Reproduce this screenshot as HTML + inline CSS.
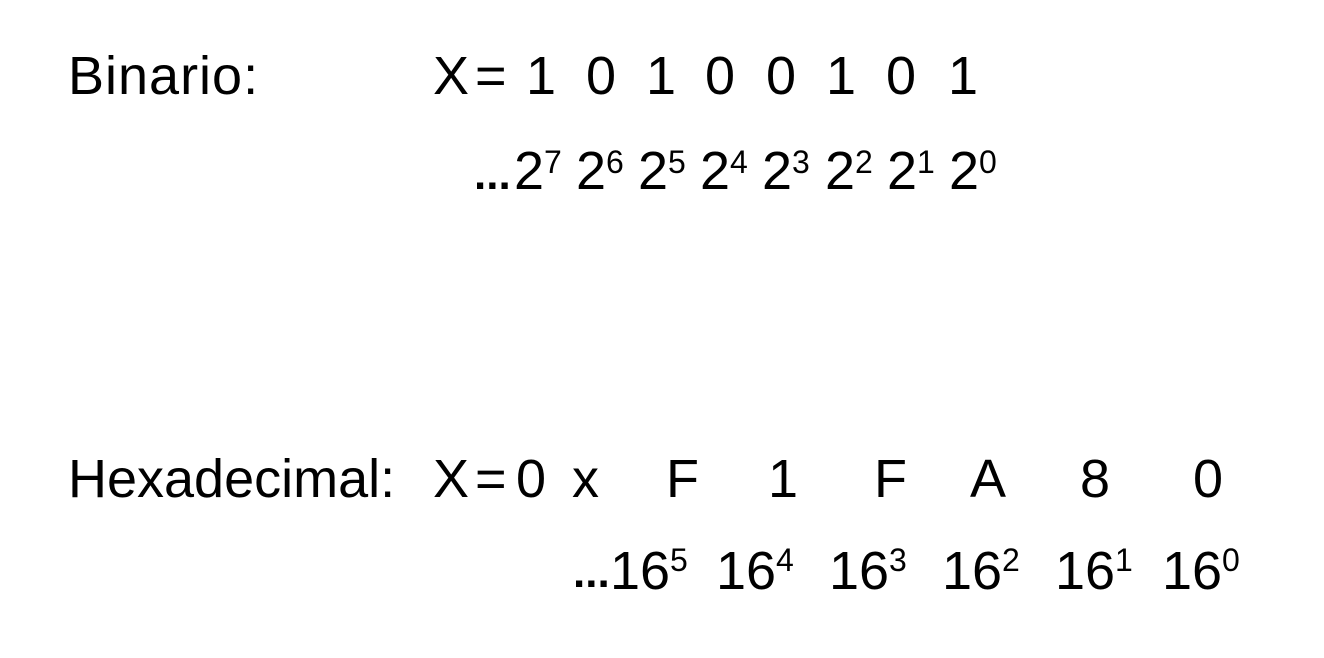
<!DOCTYPE html>
<html><head><meta charset="utf-8"><style>
html,body{margin:0;padding:0;background:#fff;}
body{width:1324px;height:658px;position:relative;overflow:hidden;font-family:"Liberation Sans",sans-serif;color:#000;}
span{position:absolute;font-size:54px;line-height:1;white-space:pre;}
span.s{font-size:32px;}
span.e{font-size:44px;font-weight:bold;}
</style></head><body>
<span style="left:68px;top:49px;letter-spacing:1px">Binario:</span>
<span style="left:433px;top:49px">X</span>
<span style="left:475px;top:49px">=</span>
<span style="left:526px;top:49px">1</span>
<span style="left:586px;top:49px">0</span>
<span style="left:646px;top:49px">1</span>
<span style="left:705px;top:49px">0</span>
<span style="left:766px;top:49px">0</span>
<span style="left:826px;top:49px">1</span>
<span style="left:886px;top:49px">0</span>
<span style="left:948px;top:49px">1</span>

<span class="e" style="left:474px;top:153px">...</span>
<span style="left:514px;top:144px">2</span><span class="s" style="left:544px;top:146px">7</span>
<span style="left:576px;top:144px">2</span><span class="s" style="left:606px;top:146px">6</span>
<span style="left:638px;top:144px">2</span><span class="s" style="left:668px;top:146px">5</span>
<span style="left:700px;top:144px">2</span><span class="s" style="left:730px;top:146px">4</span>
<span style="left:762px;top:144px">2</span><span class="s" style="left:792px;top:146px">3</span>
<span style="left:825px;top:144px">2</span><span class="s" style="left:855px;top:146px">2</span>
<span style="left:887px;top:144px">2</span><span class="s" style="left:917px;top:146px">1</span>
<span style="left:949px;top:144px">2</span><span class="s" style="left:979px;top:146px">0</span>

<span style="left:68px;top:452px">Hexadecimal:</span>
<span style="left:433px;top:452px">X</span>
<span style="left:475px;top:452px">=</span>
<span style="left:516px;top:452px">0</span>
<span style="left:572px;top:452px">x</span>
<span style="left:666px;top:452px">F</span>
<span style="left:768px;top:452px">1</span>
<span style="left:874px;top:452px">F</span>
<span style="left:970px;top:452px">A</span>
<span style="left:1080px;top:452px">8</span>
<span style="left:1193px;top:452px">0</span>

<span class="e" style="left:573px;top:551px">...</span>
<span style="left:610px;top:544px">16</span><span class="s" style="left:670px;top:544px">5</span>
<span style="left:716px;top:544px">16</span><span class="s" style="left:776px;top:544px">4</span>
<span style="left:829px;top:544px">16</span><span class="s" style="left:889px;top:544px">3</span>
<span style="left:942px;top:544px">16</span><span class="s" style="left:1002px;top:544px">2</span>
<span style="left:1055px;top:544px">16</span><span class="s" style="left:1115px;top:544px">1</span>
<span style="left:1162px;top:544px">16</span><span class="s" style="left:1222px;top:544px">0</span>
</body></html>
